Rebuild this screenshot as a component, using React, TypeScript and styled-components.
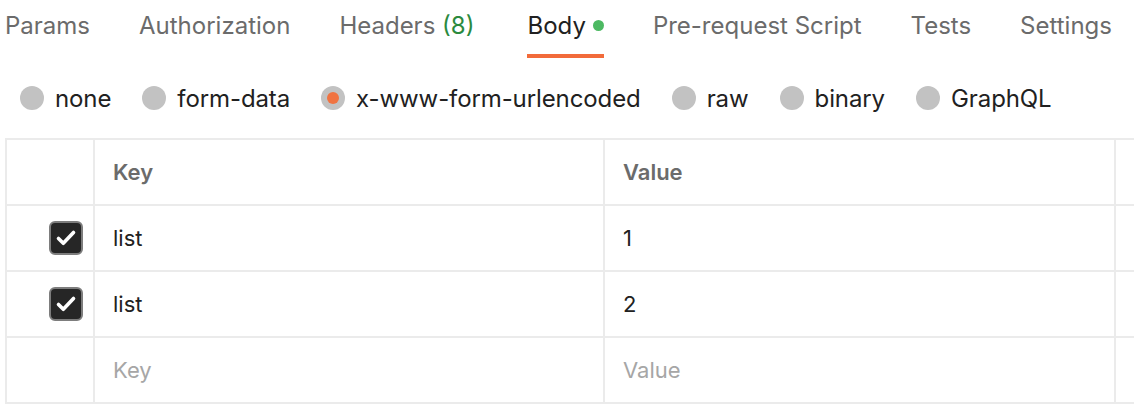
import * as React from 'react';
import styled, { createGlobalStyle } from 'styled-components';

const GlobalStyle = createGlobalStyle`
  body {
    margin: 0;
    background: #ffffff;
    font-family: Inter, "Noto Sans", sans-serif;
    color: #212121;
  }
`;

const Page = styled.div`
  width: 1134px;
  height: 420px;
  overflow: hidden;
`;

const TabBar = styled.div`
  display: flex;
  gap: 49px;
  padding-left: 5px;
  height: 58px;
  white-space: nowrap;
`;

const Tab = styled.div<{ $active?: boolean }>`
  display: flex;
  align-items: center;
  gap: 7px;
  font-size: 24px;
  line-height: 29px;
  height: 29px;
  padding-top: 11px;
  padding-bottom: 14px;
  margin-left: ${(p) => (p.$active ? '4px' : '0')};
  color: ${(p) => (p.$active ? '#212121' : '#6b6b6b')};
  border-bottom: 4px solid ${(p) => (p.$active ? '#f26b3a' : 'transparent')};
`;

const Count = styled.span`
  color: #2b8a3e;
`;

const Dot = styled.span`
  width: 11px;
  height: 11px;
  border-radius: 50%;
  background: #4cb962;
`;

const RadioRow = styled.div`
  display: flex;
  align-items: center;
  height: 80px;
  padding-left: 20px;
  gap: 31px;
  white-space: nowrap;
`;

const RadioOption = styled.label`
  display: flex;
  align-items: center;
  gap: 11px;
  font-size: 24px;
  letter-spacing: -0.1px;
  color: #212121;
`;

const RadioCircle = styled.span<{ $checked?: boolean }>`
  width: 24px;
  height: 24px;
  border-radius: 50%;
  background: #c2c2c2;
  display: flex;
  align-items: center;
  justify-content: center;

  &::after {
    content: '';
    width: 12px;
    height: 12px;
    border-radius: 50%;
    background: ${(p) => (p.$checked ? '#f07341' : 'transparent')};
  }
`;

const Table = styled.div`
  margin-left: 5px;
  border-top: 2px solid #ebebeb;
  border-left: 2px solid #ebebeb;
  width: 1300px;
`;

const Row = styled.div`
  display: grid;
  grid-template-columns: 88px 510px 511px 1fr;
  height: 64px;
  border-bottom: 2px solid #ebebeb;
`;

const Cell = styled.div<{ $head?: boolean; $placeholder?: boolean }>`
  display: flex;
  align-items: center;
  padding-left: 18px;
  border-right: 2px solid #ebebeb;
  font-size: 22px;
  font-weight: ${(p) => (p.$head ? 600 : 400)};
  color: ${(p) => (p.$head ? '#6b6b6b' : p.$placeholder ? '#a6a6a6' : '#212121')};
  white-space: nowrap;
`;

const CheckCell = styled.div`
  display: flex;
  align-items: center;
  justify-content: flex-end;
  padding-right: 10px;
  border-right: 2px solid #ebebeb;
`;

const CheckBox = styled.span`
  box-sizing: border-box;
  width: 34px;
  height: 34px;
  border-radius: 6px;
  background: #262626;
  border: 2px solid #7d7d7d;
  display: flex;
  align-items: center;
  justify-content: center;
`;

const tabs = [
  { label: 'Params' },
  { label: 'Authorization' },
  { label: 'Headers', count: 8 },
  { label: 'Body', active: true, dot: true },
  { label: 'Pre-request Script' },
  { label: 'Tests' },
  { label: 'Settings' },
];

const bodyTypes = ['none', 'form-data', 'x-www-form-urlencoded', 'raw', 'binary', 'GraphQL'];

const rows = [
  { key: 'list', value: '1' },
  { key: 'list', value: '2' },
];

const Check = () => (
  <svg width="24" height="24" viewBox="0 0 24 24" fill="none">
    <path d="M4.5 12.5l4.8 4.8L19.5 6.5" stroke="#ffffff" strokeWidth="3.6" strokeLinecap="round" strokeLinejoin="round" />
  </svg>
);

const App = () => (
  <Page>
    <GlobalStyle />
    <TabBar>
      {tabs.map((t) => (
        <Tab key={t.label} $active={t.active}>
          <span>
            {t.label}
            {t.count !== undefined && <Count> ({t.count})</Count>}
          </span>
          {t.dot && <Dot />}
        </Tab>
      ))}
    </TabBar>
    <RadioRow>
      {bodyTypes.map((b) => (
        <RadioOption key={b}>
          <RadioCircle $checked={b === 'x-www-form-urlencoded'} />
          {b}
        </RadioOption>
      ))}
    </RadioRow>
    <Table>
      <Row>
        <CheckCell />
        <Cell $head>Key</Cell>
        <Cell $head>Value</Cell>
        <Cell $head>Description</Cell>
      </Row>
      {rows.map((r, i) => (
        <Row key={i}>
          <CheckCell>
            <CheckBox>
              <Check />
            </CheckBox>
          </CheckCell>
          <Cell>{r.key}</Cell>
          <Cell>{r.value}</Cell>
          <Cell />
        </Row>
      ))}
      <Row>
        <CheckCell />
        <Cell $placeholder>Key</Cell>
        <Cell $placeholder>Value</Cell>
        <Cell />
      </Row>
    </Table>
  </Page>
);

export default App;
